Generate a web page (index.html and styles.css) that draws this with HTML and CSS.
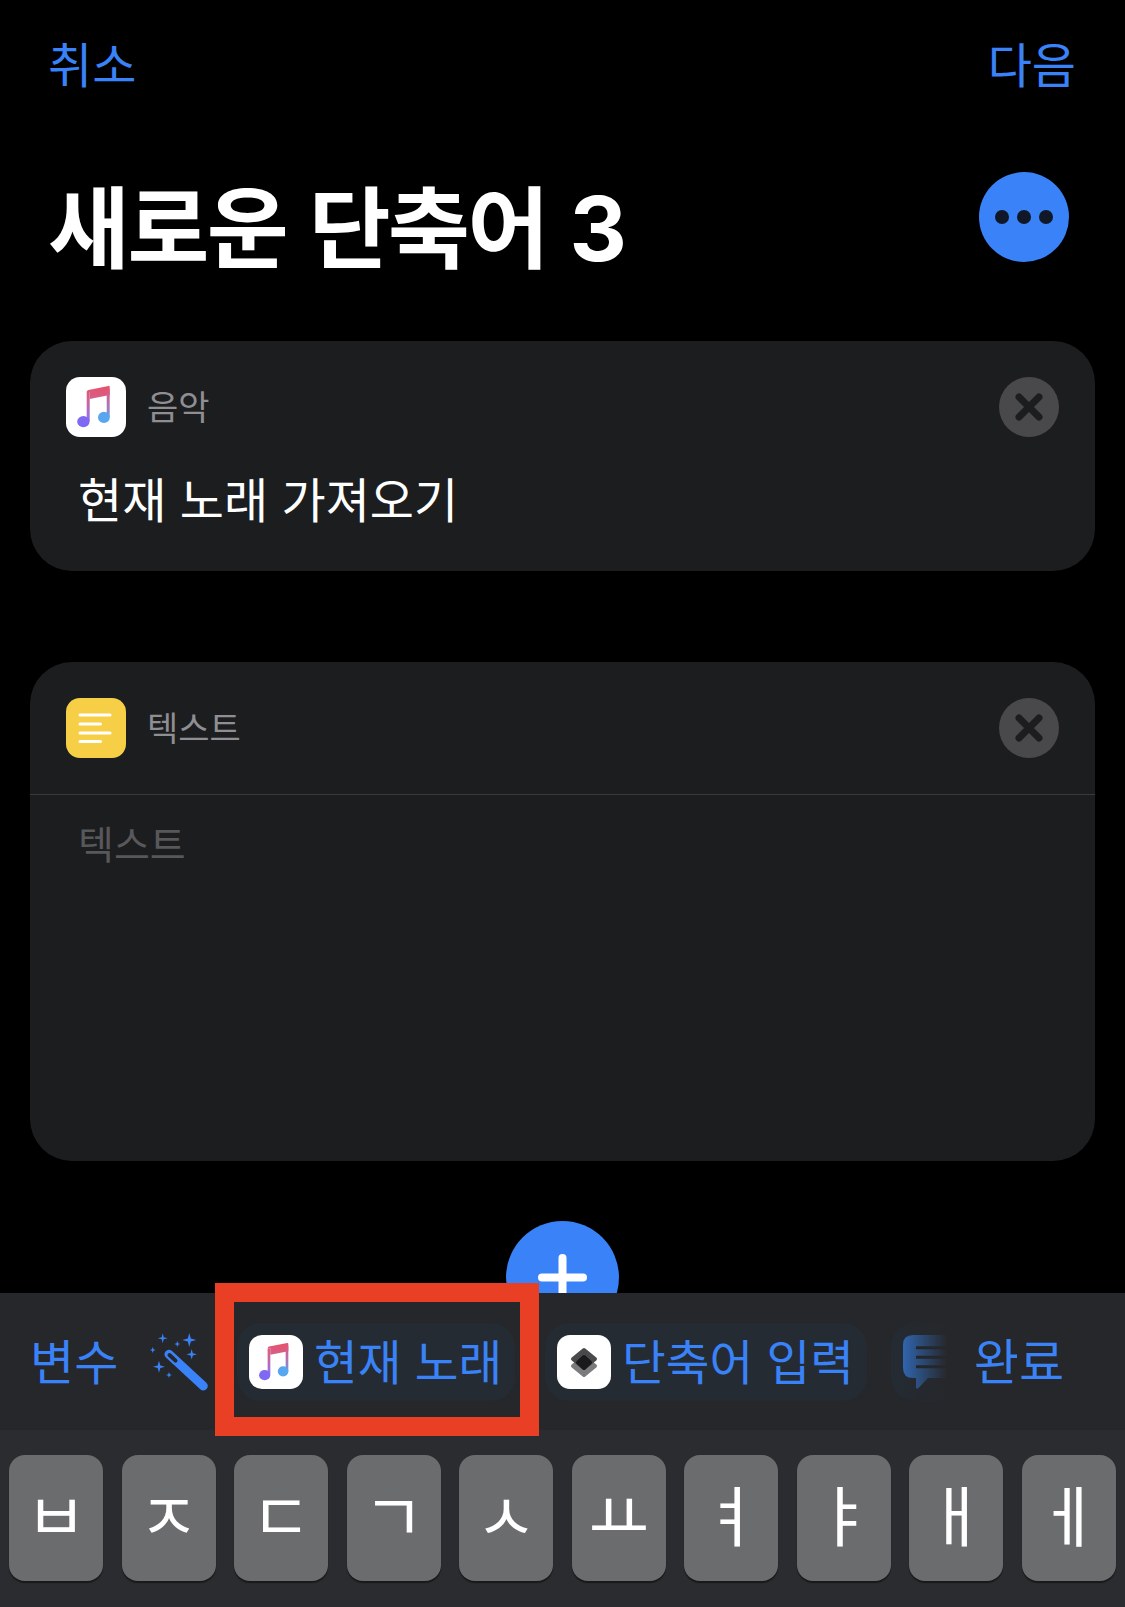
FILE: index.html
```html
<!DOCTYPE html>
<html lang="ko">
<head>
    <meta charset="UTF-8">
    <title>새로운 단축어 3</title>
    <link rel="stylesheet" href="styles.css">
</head>
<body>
    <svg class="defs" width="0" height="0">
        <defs>
            <linearGradient id="noteGrad" gradientUnits="userSpaceOnUse" x1="32" y1="9" x2="28" y2="50">
                <stop offset="0" stop-color="#e9506a"/>
                <stop offset="0.35" stop-color="#d0628f"/>
                <stop offset="0.7" stop-color="#a56fd8"/>
                <stop offset="1" stop-color="#8068f0"/>
            </linearGradient>
            <linearGradient id="noteGradRight" gradientUnits="userSpaceOnUse" x1="42" y1="9" x2="40" y2="46">
                <stop offset="0" stop-color="#e9506a"/>
                <stop offset="0.4" stop-color="#c06aa8"/>
                <stop offset="1" stop-color="#58a6f0"/>
            </linearGradient>
            <symbol id="music" viewBox="0 0 60 60">
                <path d="M20.7 15 Q20.7 13.2 22.5 12.9 L42.4 8.9 Q43.7 8.7 43.7 10 V18 L23.7 22 V15 Z" fill="url(#noteGrad)"/>
                <path d="M20.7 15 H23.7 V44 H20.7 Z" fill="url(#noteGrad)"/>
                <path d="M40.7 12 H43.7 V40 H40.7 Z" fill="url(#noteGradRight)"/>
                <ellipse cx="17.4" cy="44.6" rx="6.2" ry="5.6" fill="#7f68f2"/>
                <ellipse cx="37.9" cy="40.4" rx="5.9" ry="5.6" fill="#58a6f0"/>
            </symbol>
        </defs>
    </svg>

    <main class="screen">
        <header class="nav">
            <span>취소</span>
            <span>다음</span>
        </header>

        <div class="title-row">
            <h1 class="title">새로운 단축어 3</h1>
            <button class="more"><i></i><i></i><i></i></button>
        </div>

        <section class="card card-music">
            <div class="card-head">
                <div class="app-icon white">
                    <svg width="60" height="60"><use href="#music"/></svg>
                </div>
                <span class="card-label">음악</span>
                <button class="close">
                    <svg width="60" height="60" viewBox="0 0 60 60"><path d="M20 20 L40 40 M40 20 L20 40"/></svg>
                </button>
            </div>
            <p class="card-text">현재 노래 가져오기</p>
        </section>

        <section class="card card-text-action">
            <div class="card-head bordered">
                <div class="app-icon yellow">
                    <svg width="60" height="60" viewBox="0 0 60 60">
                        <path d="M14 17 H44 M14 26 H34.5 M14 35 H44 M14 43.5 H34.5"/>
                    </svg>
                </div>
                <span class="card-label">텍스트</span>
                <button class="close">
                    <svg width="60" height="60" viewBox="0 0 60 60"><path d="M20 20 L40 40 M40 20 L20 40"/></svg>
                </button>
            </div>
            <p class="placeholder">텍스트</p>
        </section>

        <button class="add">
            <svg width="113" height="113" viewBox="0 0 113 113"><path d="M56.5 37 V80 M36 56.5 H77"/></svg>
        </button>
    </main>

    <div class="toolbar">
        <span class="tool-label">변수</span>
        <svg class="wand" width="60" height="60" viewBox="0 0 60 60">
            <path class="wand-line" d="M19 22.3 L53.3 54"/>
            <path class="wand-hole" d="M19.5 23 L25.5 28.6"/>
            <path class="spark" d="M12.7 1.3 L13.7 5.3 L17.7 6.3 L13.7 7.3 L12.7 11.3 L11.7 7.3 L7.7 6.3 L11.7 5.3 Z"/>
            <path class="spark" d="M39.3 1 L40.8 6.5 L46.3 8 L40.8 9.5 L39.3 15 L37.8 9.5 L32.3 8 L37.8 6.5 Z"/>
            <path class="spark" d="M41.7 17 L42.8 21.2 L47 22.3 L42.8 23.4 L41.7 27.6 L40.6 23.4 L36.4 22.3 L40.6 21.2 Z"/>
            <path class="spark" d="M9 28.7 L10.3 33.4 L15 34.7 L10.3 36 L9 40.7 L7.7 36 L3 34.7 L7.7 33.4 Z"/>
            <path class="spark" d="M2.7 15 L3.5 17.2 L5.7 18 L3.5 18.8 L2.7 21 L1.9 18.8 L-0.3 18 L1.9 17.2 Z"/>
            <path class="spark" d="M27.3 9 L28.1 11.2 L30.3 12 L28.1 12.8 L27.3 15 L26.5 12.8 L24.3 12 L26.5 11.2 Z"/>
            <path class="spark" d="M19 40 L19.8 42.2 L22 43 L19.8 43.8 L19 46 L18.2 43.8 L16 43 L18.2 42.2 Z"/>
        </svg>
        <div class="chip">
            <div class="chip-icon">
                <svg width="54" height="54"><use href="#music"/></svg>
            </div>
            <span>현재 노래</span>
        </div>
        <div class="chip">
            <div class="chip-icon">
                <svg class="layers" width="54" height="54" viewBox="0 0 54 54">
                    <path d="M27 22 L38 31 L27 40 L16 31 Z" fill="#7b7b7d"/>
                    <path d="M27 15 L38 24 L27 33 L16 24 Z" fill="#4a4a4c"/>
                    <path d="M27 22 L33 27.5 L27 33 L21 27.5 Z" fill="#1a1a1c"/>
                </svg>
            </div>
            <span>단축어 입력</span>
        </div>
        <div class="chip chip-cut">
            <svg width="54" height="54" viewBox="0 0 54 54">
                <path d="M10 0 H54 V43 H25 L15.5 53 Q13 55 13 52 V43 H10 Q0 43 0 33 V10 Q0 0 10 0 Z" fill="#3273cc"/>
                <path d="M13 12.7 H54 M13 22.3 H54 M13 31.7 H54" stroke="#20262d" stroke-width="3"/>
            </svg>
        </div>
        <div class="done"><span>완료</span></div>
    </div>

    <div class="keyboard">
        <div class="key">ㅂ</div>
        <div class="key">ㅈ</div>
        <div class="key">ㄷ</div>
        <div class="key">ㄱ</div>
        <div class="key">ㅅ</div>
        <div class="key">ㅛ</div>
        <div class="key">ㅕ</div>
        <div class="key">ㅑ</div>
        <div class="key">ㅐ</div>
        <div class="key">ㅔ</div>
    </div>

    <div class="highlight"></div>
</body>
</html>
```

FILE: styles.css
```css
* {
    box-sizing: border-box;
}
body {
    position: relative;
    margin: 0;
    width: 1125px;
    height: 1607px;
    overflow: hidden;
    background-color: black;
    font-family: "Noto Sans CJK KR", "Noto Sans", sans-serif;
    color: white;
}
button {
    border: 0;
    padding: 0;
    background: none;
}
.defs {
    position: absolute;
}
.screen {
    height: 1293px;
    overflow: hidden;
    padding: 33px 30px 0;
}
.nav {
    display: flex;
    justify-content: space-between;
    padding: 0 19px 0 18px;
    font-size: 48px;
    line-height: 58px;
    color: #3a82f7;
}
.title-row {
    display: flex;
    justify-content: space-between;
    align-items: flex-start;
    height: 250px;
    padding: 81px 26px 0 18px;
}
.title {
    margin: 2px 0 0;
    font-family: Inter, "Noto Sans CJK KR", sans-serif;
    font-size: 89px;
    font-weight: 700;
    line-height: 110px;
    letter-spacing: -2.5px;
    word-spacing: 4px;
}
.more {
    display: flex;
    justify-content: center;
    align-items: center;
    gap: 8px;
    width: 90px;
    height: 90px;
    border-radius: 50%;
    background-color: #3a82f7;
}
.more i {
    width: 14px;
    height: 14px;
    border-radius: 50%;
    background-color: #101828;
}
.card {
    border-radius: 42px;
    background-color: #1c1d1f;
}
.card-music {
    height: 230px;
}
.card-text-action {
    height: 499px;
    margin-top: 91px;
}
.card-head {
    display: flex;
    align-items: center;
    height: 132px;
    padding: 0 36px;
}
.bordered {
    height: 133px;
    border-bottom: 1px solid #3a3a3c;
}
.app-icon {
    width: 60px;
    height: 60px;
    border-radius: 14px;
}
.app-icon svg {
    display: block;
}
.white {
    background-color: white;
}
.yellow {
    background-color: #f7cf46;
}
.yellow path {
    fill: none;
    stroke: white;
    stroke-width: 3;
    stroke-linecap: round;
}
.card-label {
    margin-left: 21px;
    padding-bottom: 4px;
    font-size: 34px;
    color: #8e8e93;
}
.close {
    width: 60px;
    height: 60px;
    margin-left: auto;
    border-radius: 50%;
    background-color: #49494b;
}
.close svg {
    display: block;
}
.close path {
    fill: none;
    stroke: #1c1d1f;
    stroke-width: 7;
    stroke-linecap: round;
}
.card-text {
    margin: -11px 0 0 48px;
    font-size: 48px;
    line-height: 70px;
}
.placeholder {
    margin: 22px 0 0 48px;
    font-size: 39px;
    line-height: 50px;
    color: #58585b;
}
.add {
    display: block;
    width: 113px;
    height: 113px;
    margin: 60px auto 0;
    border-radius: 50%;
    background-color: #3a82f7;
}
.add svg {
    display: block;
}
.add path {
    fill: none;
    stroke: white;
    stroke-width: 8;
    stroke-linecap: round;
}
.toolbar {
    position: relative;
    display: flex;
    align-items: center;
    height: 137px;
    padding-left: 30px;
    overflow: hidden;
    background-color: #26272a;
    font-size: 47.5px;
    color: #3a82f7;
}
.tool-label {
    width: 120px;
    padding-bottom: 6px;
    font-size: 48px;
}
.wand {
    flex-shrink: 0;
}
.wand-line {
    fill: none;
    stroke: #3a82f7;
    stroke-width: 9;
    stroke-linecap: round;
}
.wand-hole {
    fill: none;
    stroke: #26272a;
    stroke-width: 4;
    stroke-linecap: round;
}
.spark {
    fill: #3a82f7;
}
.chip {
    display: flex;
    align-items: center;
    flex-shrink: 0;
    gap: 11px;
    height: 78px;
    margin-left: 27px;
    padding: 0 13px 0 12px;
    border-radius: 24px;
    background-color: #242b33;
    white-space: nowrap;
}
.chip + .chip {
    margin-left: 30px;
}
.chip span {
    padding-bottom: 4px;
}
.chip-icon {
    width: 54px;
    height: 54px;
    border-radius: 13px;
    background-color: white;
}
.chip-icon svg {
    display: block;
}
.layers path {
    stroke-linejoin: round;
    stroke-width: 4;
}
.layers path:nth-child(1) {
    stroke: #7b7b7d;
}
.layers path:nth-child(2) {
    stroke: #4a4a4c;
}
.layers path:nth-child(3) {
    stroke: #1a1a1c;
}
.chip + .chip-cut {
    width: 200px;
    margin-left: 24px;
}
.done {
    position: absolute;
    top: 0;
    right: 0;
    display: flex;
    align-items: center;
    justify-content: flex-end;
    width: 232px;
    height: 137px;
    padding: 0 61px 6px 0;
    background: linear-gradient(to right, rgba(38, 39, 42, 0), #26272a 54px);
    font-size: 49px;
}
.keyboard {
    display: flex;
    gap: 18.5px;
    height: 177px;
    padding: 25px 9px 0;
    background-color: #2b2c2f;
}
.key {
    display: flex;
    justify-content: center;
    align-items: center;
    width: 94px;
    height: 126px;
    padding-bottom: 12px;
    border-radius: 16px;
    background-color: #6b6c6e;
    box-shadow: 0 2px 1px #18191b;
    font-size: 66px;
}
.highlight {
    position: absolute;
    left: 215px;
    top: 1283px;
    width: 324px;
    height: 153px;
    border: 19px solid #e94025;
}
```
